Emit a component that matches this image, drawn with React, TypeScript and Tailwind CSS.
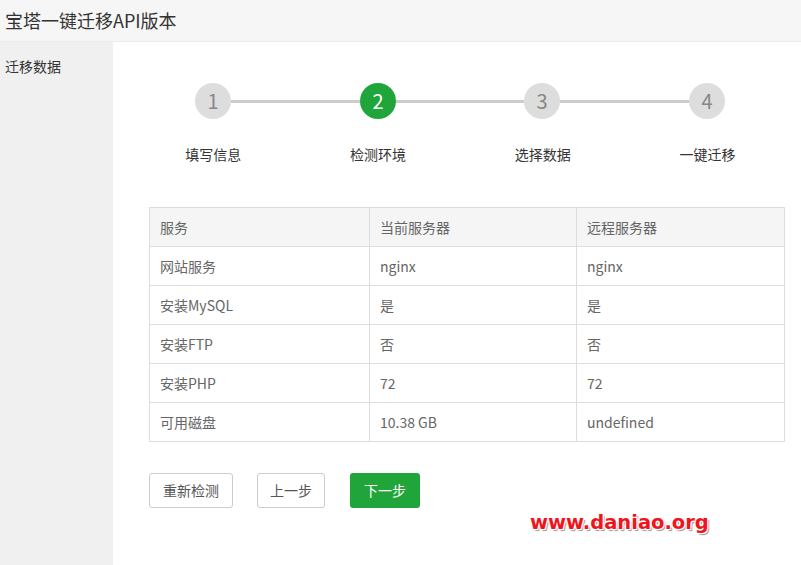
const font = { fontFamily: '"Noto Sans CJK SC", "Liberation Sans", sans-serif' }

const steps = ["填写信息", "检测环境", "选择数据", "一键迁移"]

const rows = [
  ["网站服务", "nginx", "nginx"],
  ["安装MySQL", "是", "是"],
  ["安装FTP", "否", "否"],
  ["安装PHP", "72", "72"],
  ["可用磁盘", "10.38 GB", "undefined"],
]

function Circle({ n, active }: { n: number; active?: boolean }) {
  return (
    <div
      className={
        "w-[36px] h-[36px] rounded-full flex items-center justify-center text-[20px] shrink-0 " +
        (active ? "bg-[#20a53a] text-white" : "bg-[#dddddd] text-[#888]")
      }
    >
      {n}
    </div>
  )
}

export default function App() {
  return (
    <div className="relative w-[801px] h-[565px] flex flex-col bg-white text-[#333] overflow-hidden" style={font}>
      <div className="h-[42px] shrink-0 bg-[#f6f6f6] border-b border-[#ececec] flex items-center pl-[5px] text-[18px] text-[#333]">
        宝塔一键迁移API版本
      </div>
      <div className="flex flex-1">
        <div className="w-[113px] shrink-0 bg-[#f0f0f0] pl-[5px] pt-[14px] text-[14px] text-[#333]">迁移数据</div>
        <div className="flex-1 flex flex-col">
          <div className="mt-[41px] ml-[82px] flex items-center">
            <Circle n={1} />
            <div className="w-[129px] h-[3px] bg-[#cccccc]" />
            <Circle n={2} active />
            <div className="w-[128px] h-[3px] bg-[#cccccc]" />
            <Circle n={3} />
            <div className="w-[129px] h-[3px] bg-[#cccccc]" />
            <Circle n={4} />
          </div>
          <div className="mt-[25px] ml-[18px] flex">
            {steps.map((s) => (
              <div key={s} className="w-[164.7px] text-center text-[14px] leading-[20px] text-[#333]">
                {s}
              </div>
            ))}
          </div>
          <table className="mt-[43px] ml-[36px] w-[636px] border-collapse text-[14px] leading-[18px] text-[#666]">
            <thead>
              <tr className="bg-[#f5f5f5] h-[39px]">
                <th className="w-[220px] border border-[#dddddd] text-left font-normal pl-[10px] pb-[1px]">服务</th>
                <th className="w-[207px] border border-[#dddddd] text-left font-normal pl-[10px] pb-[1px]">当前服务器</th>
                <th className="border border-[#dddddd] text-left font-normal pl-[10px] pb-[1px]">远程服务器</th>
              </tr>
            </thead>
            <tbody>
              {rows.map((r) => (
                <tr key={r[0]} className="h-[39px]">
                  {r.map((c, i) => (
                    <td key={i} className="border border-[#dddddd] pl-[10px] pb-[1px]">
                      {c}
                    </td>
                  ))}
                </tr>
              ))}
            </tbody>
          </table>
          <div className="mt-[31px] ml-[36px] flex text-[14px]">
            <button className="w-[84px] h-[35px] border border-[#cccccc] rounded-[3px] text-[#555] bg-white">重新检测</button>
            <button className="ml-[24px] w-[68px] h-[35px] border border-[#cccccc] rounded-[3px] text-[#555] bg-white">上一步</button>
            <button className="ml-[25px] w-[70px] h-[35px] rounded-[3px] text-white bg-[#20a53a]">下一步</button>
          </div>
        </div>
      </div>
      <div
        className="absolute left-[530px] top-[508px] text-[19.5px] font-bold text-[#f0141e] [text-shadow:1px_1px_0_#fff,-1px_-1px_0_#fff,1px_-1px_0_#fff,-1px_1px_0_#fff,2px_2px_1px_#999]"
        style={{ fontFamily: '"DejaVu Sans", sans-serif' }}
      >
        www.daniao.org
      </div>
    </div>
  )
}
